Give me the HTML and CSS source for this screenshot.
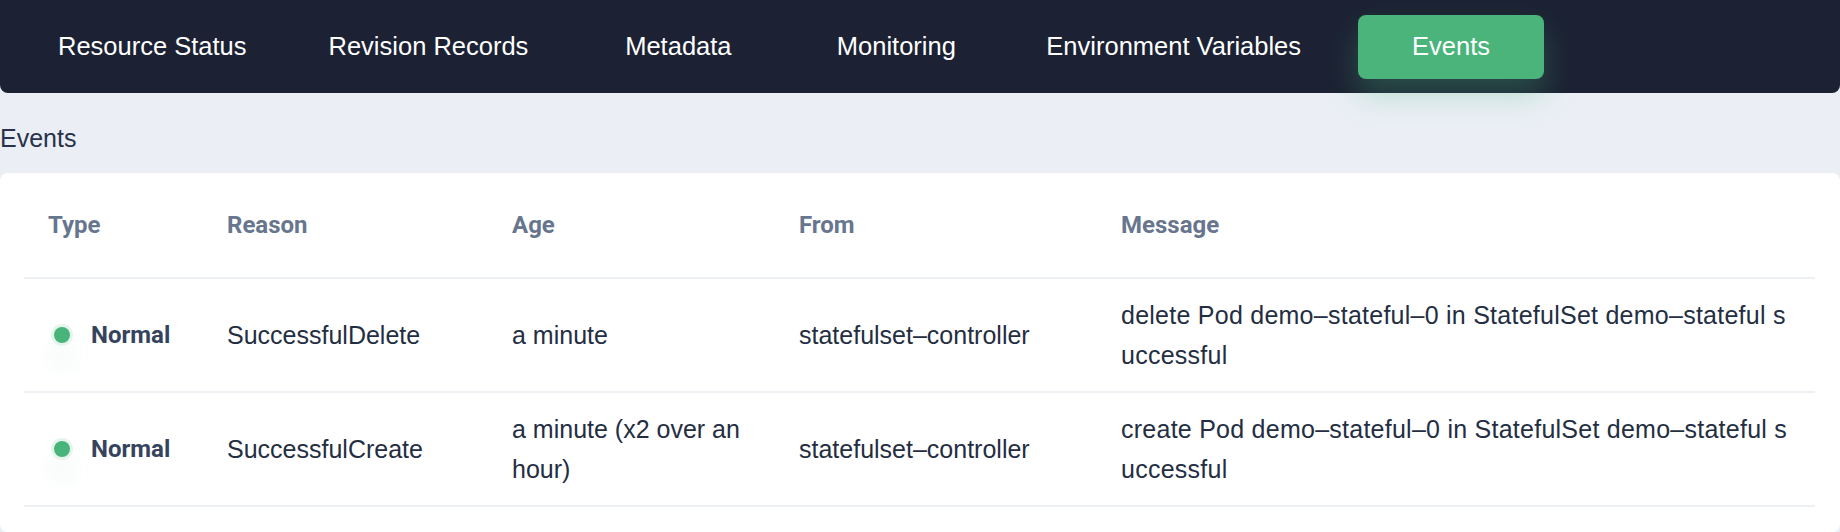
FILE: index.html
```html
<!DOCTYPE html>
<html lang="en">
<head>
<meta charset="utf-8">
<title>Events</title>
<link rel="stylesheet" href="styles.css">
</head>
<body>
<nav class="tabs">
  <a class="tab">Resource Status</a>
  <a class="tab">Revision Records</a>
  <a class="tab">Metadata</a>
  <a class="tab">Monitoring</a>
  <a class="tab">Environment Variables</a>
  <a class="tab active">Events</a>
</nav>
<h2 class="section-title">Events</h2>
<div class="card">
  <table class="events">
    <colgroup>
      <col class="c-type"><col class="c-reason"><col class="c-age"><col class="c-from"><col class="c-msg">
    </colgroup>
    <thead>
      <tr><th>Type</th><th>Reason</th><th>Age</th><th>From</th><th>Message</th></tr>
    </thead>
    <tbody>
      <tr>
        <td><span class="type"><span class="dot"></span><span class="type-label">Normal</span></span></td>
        <td>SuccessfulDelete</td>
        <td>a minute</td>
        <td>statefulset–controller</td>
        <td class="msg">delete Pod demo–stateful–0 in StatefulSet demo–stateful successful</td>
      </tr>
      <tr>
        <td><span class="type"><span class="dot"></span><span class="type-label">Normal</span></span></td>
        <td>SuccessfulCreate</td>
        <td>a minute (x2 over an hour)</td>
        <td>statefulset–controller</td>
        <td class="msg">create Pod demo–stateful–0 in StatefulSet demo–stateful successful</td>
      </tr>
    </tbody>
  </table>
</div>
</body>
</html>
```
FILE: styles.css
```css
html, body {
  margin: 0;
  padding: 0;
}
body {
  background: #ebeff5;
  font-family: "Liberation Sans", Arial, sans-serif;
  color: #242e42;
  width: 1840px;
  height: 532px;
  overflow: hidden;
}
.tabs {
  height: 93px;
  background: #1c2233;
  border-radius: 0 0 8px 8px;
  display: flex;
  align-items: center;
  padding-left: 33px;
  gap: 32px;
  box-sizing: border-box;
}
.tab {
  min-width: 186px;
  height: 64px;
  padding: 0 25px;
  box-sizing: border-box;
  display: flex;
  align-items: center;
  justify-content: center;
  color: #ffffff;
  font-size: 25.5px;
  border-radius: 8px;
  white-space: nowrap;
}
.tab.active {
  background: #4ab47b;
  box-shadow: 0 16px 30px rgba(74, 180, 123, 0.3);
}
.section-title {
  margin: 29px 0 19px;
  font-size: 25px;
  line-height: 32px;
  font-weight: 400;
  color: #28324a;
}
.card {
  background: #ffffff;
  border-radius: 8px;
  padding: 0 25px 25px 24px;
  height: 359px;
  box-sizing: border-box;
}
.events {
  width: 100%;
  border-collapse: collapse;
  table-layout: fixed;
}
.c-type { width: 179px; }
.c-reason { width: 285px; }
.c-age { width: 287px; }
.c-from { width: 322px; }
.events th {
  height: 104px;
  padding: 0 24px;
  text-align: left;
  font-family: Roboto, "Liberation Sans", sans-serif;
  font-weight: 700;
  font-size: 24px;
  color: #67768e;
  border-bottom: 2px solid #edf1f6;
}
.events td {
  padding: 16px 24px;
  font-size: 25px;
  line-height: 40px;
  vertical-align: middle;
  border-bottom: 2px solid #edf1f6;
}
.events .msg {
  word-break: break-all;
  letter-spacing: 0.25px;
}
.type {
  display: flex;
  align-items: center;
}
.dot {
  width: 16px;
  height: 16px;
  margin-left: 6px;
  margin-right: 21px;
  border-radius: 50%;
  background: #48b47a;
  box-shadow: 0 0 0 3px #e5f5ec, 0 20px 24px rgba(72, 180, 122, 0.16);
  flex: none;
}
.type-label {
  font-family: Roboto, "Liberation Sans", sans-serif;
  font-weight: 700;
  font-size: 24px;
  color: #36435c;
}
```
